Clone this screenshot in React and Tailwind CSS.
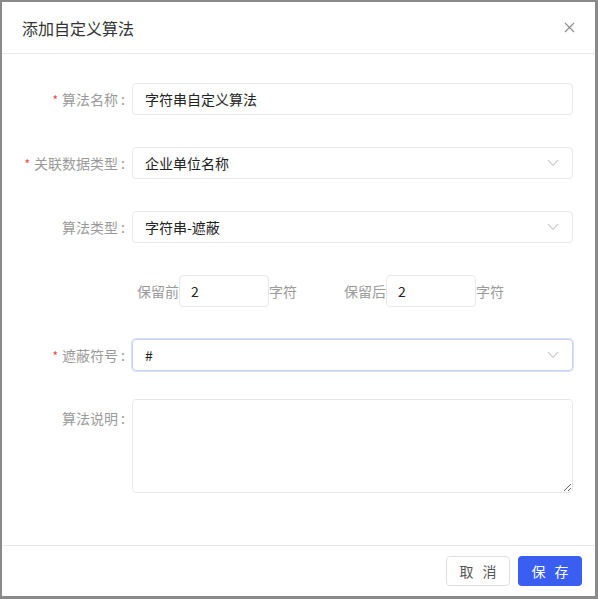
import { useState } from 'react'

const font = { fontFamily: '"Noto Sans CJK SC", "Noto Sans", sans-serif' }

function Chevron() {
  return (
    <svg width="12" height="8" viewBox="0 0 12 8" className="shrink-0">
      <polyline points="1,1 6,6.5 11,1" fill="none" stroke="#c0c4cc" strokeWidth="1.1" />
    </svg>
  )
}

function Label({ text, required, className = '' }) {
  return (
    <div className={`w-[124px] shrink-0 text-right text-[14px] text-[#9a9a9a] leading-none pr-[1px] ${className}`}>
      {required && <span className="text-[#f04848] mr-[4px] text-[12px]">*</span>}
      {text}
      <span className="ml-[3px]">:</span>
    </div>
  )
}

function Row({ label, required, children, className = '' }) {
  return (
    <div className={`flex items-center ${className}`}>
      <Label text={label} required={required} />
      <div className="flex-1 ml-[6px] mr-[22px]">{children}</div>
    </div>
  )
}

export default function App() {
  const [name, setName] = useState('字符串自定义算法')
  const [front, setFront] = useState('2')
  const [back, setBack] = useState('2')

  return (
    <div className="w-[598px] h-[599px] bg-[#8a8a8a] pl-[2px] pt-[2px] pr-[3px] pb-[3px]" style={font}>
      <div className="w-full h-full bg-white flex flex-col">
        <div className="h-[52px] border-b border-[#e8e8e8] flex items-center justify-between pl-[20px] pr-[20px] shrink-0">
          <span className="text-[16px] text-[#333]">添加自定义算法</span>
          <svg width="11" height="11" viewBox="0 0 11 11">
            <path d="M1 1L10 10M10 1L1 10" stroke="#8e8e8e" strokeWidth="1.2" />
          </svg>
        </div>

        <div className="flex-1 pt-[29px]">
          <Row label="算法名称" required className="mb-[32px]">
            <input
              value={name}
              onChange={(e) => setName(e.target.value)}
              className="w-full h-[32px] border border-[#e6e8f0] rounded-[4px] pl-[12px] text-[14px] text-[#222] outline-none"
            />
          </Row>
          <Row label="关联数据类型" required className="mb-[32px]">
            <div className="w-full h-[32px] border border-[#e6e8f0] rounded-[4px] pl-[12px] pr-[13px] flex items-center justify-between text-[14px] text-[#222]">
              <span>企业单位名称</span>
              <Chevron />
            </div>
          </Row>
          <Row label="算法类型" className="mb-[32px]">
            <div className="w-full h-[32px] border border-[#e6e8f0] rounded-[4px] pl-[12px] pr-[13px] flex items-center justify-between text-[14px] text-[#222]">
              <span>字符串-遮蔽</span>
              <Chevron />
            </div>
          </Row>
          <div className="flex items-center pl-[135px] mb-[32px] text-[14px] text-[#9a9a9a]">
            <span>保留前</span>
            <input
              value={front}
              onChange={(e) => setFront(e.target.value)}
              className="w-[90px] h-[32px] border border-[#e6e8f0] rounded-[4px] pl-[11px] text-[14px] text-[#222] outline-none"
            />
            <span>字符</span>
            <span className="ml-[47px]">保留后</span>
            <input
              value={back}
              onChange={(e) => setBack(e.target.value)}
              className="w-[90px] h-[32px] border border-[#e6e8f0] rounded-[4px] pl-[11px] text-[14px] text-[#222] outline-none"
            />
            <span>字符</span>
          </div>
          <Row label="遮蔽符号" required className="mb-[28px]">
            <div className="w-full h-[32px] border border-[#c6cff6] rounded-[4px] shadow-[0_0_0_1px_#dbe1fa] pl-[12px] pr-[13px] flex items-center justify-between text-[14px] text-[#222]">
              <span>#</span>
              <Chevron />
            </div>
          </Row>
          <div className="flex items-start">
            <Label text="算法说明" className="pt-[12px]" />
            <div className="flex-1 ml-[6px] mr-[22px]">
              <textarea className="block w-full h-[94px] border border-[#e6e8f0] rounded-[4px] outline-none px-[12px] py-[6px] text-[14px]" />
            </div>
          </div>
        </div>

        <div className="h-[51px] border-t border-[#e8e8e8] flex items-center justify-end gap-[8px] pr-[13px] shrink-0">
          <button className="w-[64px] h-[30px] border border-[#dcdfe6] rounded-[4px] text-[14px] text-[#555] bg-white tracking-[9px] pl-[9px]">取消</button>
          <button className="w-[64px] h-[30px] rounded-[4px] text-[14px] text-white bg-[#3a5ef2] tracking-[9px] pl-[9px]">保存</button>
        </div>
      </div>
    </div>
  )
}
